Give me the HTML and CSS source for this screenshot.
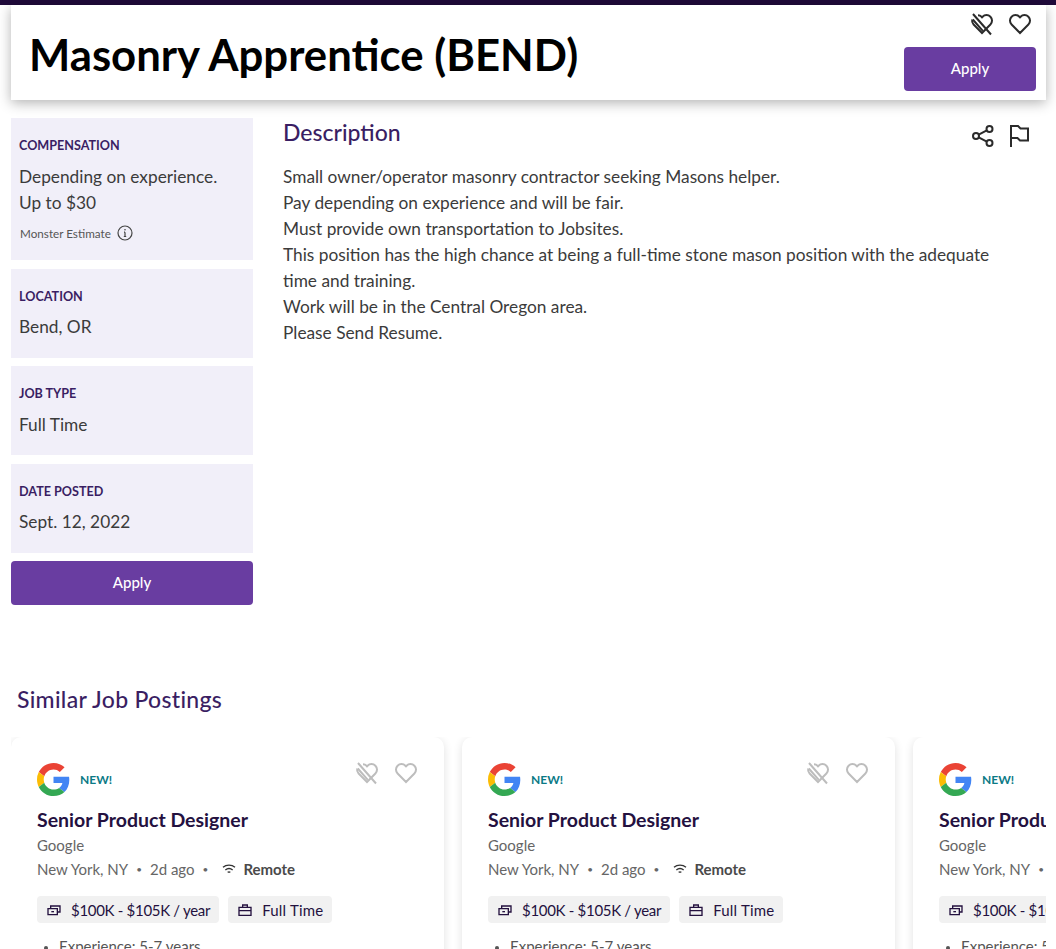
FILE: index.html
```html
<!DOCTYPE html>
<html lang="en">
<head>
  <meta charset="UTF-8">
  <meta name="viewport" content="width=device-width, initial-scale=1.0">
  <title>Masonry Apprentice (BEND)</title>
  <link rel="stylesheet" href="styles.css">
</head>
<body>
  <svg class="sprites" width="0" height="0">
    <symbol id="heart" viewBox="0 0 24 24"><path d="M12 21 3.600 12.500a5.500 5.500 0 0 1 0-7.800 5.500 5.500 0 0 1 7.800 0l.6.6.6-.6a5.500 5.500 0 0 1 7.800 0 5.500 5.500 0 0 1 0 7.800z"/></symbol>
    <symbol id="heart-off" viewBox="0 0 24 24"><path d="M8 3.200c1.300 0 2.500.5 3.400 1.500l.6.6.6-.6a5.500 5.500 0 0 1 7.800 0 5.500 5.500 0 0 1 0 7.800L12 21l-8.400-8.500a5.500 5.500 0 0 1-1.400-5"/><path d="M3 2l18 20.500M2.800 7.500l10 11.300"/></symbol>
    <symbol id="google" viewBox="0 0 48 48">
      <path fill="#EA4335" d="M24 9.500c3.500 0 6.700 1.200 9.200 3.600l6.900-6.900C35.900 2.400 30.500 0 24 0 14.600 0 6.500 5.400 2.600 13.200l8 6.200C12.400 13.700 17.700 9.500 24 9.500z"/>
      <path fill="#4285F4" d="M46.980 24.550c0-1.570-.15-3.090-.38-4.550H24v9.020h12.940c-.58 2.960-2.260 5.480-4.780 7.180l7.730 6c4.510-4.180 7.090-10.360 7.090-17.650z"/>
      <path fill="#FBBC05" d="M10.530 28.590A14.500 14.500 0 0 1 9.770 24c0-1.600.27-3.140.76-4.590l-7.980-6.190A23.900 23.900 0 0 0 0 24c0 3.870.92 7.520 2.560 10.780z"/>
      <path fill="#34A853" d="M24 48c6.480 0 11.930-2.130 15.890-5.810l-7.730-6c-2.150 1.450-4.920 2.300-8.160 2.300-6.260 0-11.570-4.220-13.470-9.910l-7.980 6.190C6.510 42.620 14.620 48 24 48z"/>
    </symbol>
    <symbol id="wifi" viewBox="0 0 24 24"><path d="M3 9.500c5-4.500 13-4.500 18 0M6.500 13.500c3.200-2.700 7.800-2.700 11 0M10 17c1.200-.8 2.800-.8 4 0"/></symbol>
    <symbol id="money" viewBox="0 0 24 24"><path d="M3 10h14v9H3zM7 10V6h14v9h-4"/><path d="M8 14.500h4"/></symbol>
    <symbol id="case" viewBox="0 0 24 24"><path d="M3 8h18v12H3zM8.500 8V4.500h7V8M3 13h18"/></symbol>
  </svg>

  <div class="top-bar"></div>

  <header class="job-header">
    <h1>Masonry Apprentice (BEND)</h1>
    <div class="header-actions">
      <div class="icon-row">
        <svg class="icon"><use href="#heart-off"/></svg>
        <svg class="icon"><use href="#heart"/></svg>
      </div>
      <a class="btn header-btn">Apply</a>
    </div>
  </header>

  <div class="job-body">
    <aside class="sidebar">
      <section class="fact fact-comp">
        <h3>COMPENSATION</h3>
        <p>Depending on experience.<br>Up to $30</p>
        <div class="estimate">
          Monster Estimate
          <svg class="info" viewBox="0 0 16 16"><circle cx="8" cy="8" r="7"/><path d="M8 7.200v4.300M6.800 11.500h2.400M7 7.200h1"/><circle class="dot" cx="8" cy="4.700" r=".8"/></svg>
        </div>
      </section>
      <section class="fact">
        <h3>LOCATION</h3>
        <p>Bend, OR</p>
      </section>
      <section class="fact">
        <h3>JOB TYPE</h3>
        <p>Full Time</p>
      </section>
      <section class="fact">
        <h3>DATE POSTED</h3>
        <p>Sept. 12, 2022</p>
      </section>
      <a class="btn">Apply</a>
    </aside>

    <main class="description">
      <div class="description-head">
        <h2>Description</h2>
        <div class="icon-row">
          <svg class="icon" viewBox="0 0 24 24"><circle cx="18.500" cy="5" r="3"/><circle cx="5" cy="12" r="3"/><circle cx="18.500" cy="19" r="3"/><path d="M7.700 10.600l8.100-4.200M7.700 13.400l8.100 4.200"/></svg>
          <svg class="icon" viewBox="0 0 24 24"><path d="M4 23V2h7l2.500 2.500H21v12h-8L10.500 14H4"/></svg>
        </div>
      </div>
      <p>Small owner/operator masonry contractor seeking Masons helper.<br>
      Pay depending on experience and will be fair.<br>
      Must provide own transportation to Jobsites.<br>
      This position has the high chance at being a full-time stone mason position with the adequate time and training.<br>
      Work will be in the Central Oregon area.<br>
      Please Send Resume.</p>
    </main>
  </div>

  <section class="similar">
    <h2>Similar Job Postings</h2>
    <div class="card-row">
      <article class="card">
        <div class="card-top">
          <svg class="logo"><use href="#google"/></svg>
          <span class="new">NEW!</span>
          <div class="card-icons">
            <svg class="icon"><use href="#heart-off"/></svg>
            <svg class="icon"><use href="#heart"/></svg>
          </div>
        </div>
        <h4>Senior Product Designer</h4>
        <div class="company">Google</div>
        <div class="meta">New York, NY<i>•</i>2d ago<i>•</i><svg class="wifi"><use href="#wifi"/></svg><b>Remote</b></div>
        <div class="pills">
          <span class="pill pill-pay"><svg><use href="#money"/></svg>$100K - $105K / year</span>
          <span class="pill"><svg><use href="#case"/></svg>Full Time</span>
        </div>
        <ul><li>Experience: 5-7 years</li></ul>
      </article>
      <article class="card">
        <div class="card-top">
          <svg class="logo"><use href="#google"/></svg>
          <span class="new">NEW!</span>
          <div class="card-icons">
            <svg class="icon"><use href="#heart-off"/></svg>
            <svg class="icon"><use href="#heart"/></svg>
          </div>
        </div>
        <h4>Senior Product Designer</h4>
        <div class="company">Google</div>
        <div class="meta">New York, NY<i>•</i>2d ago<i>•</i><svg class="wifi"><use href="#wifi"/></svg><b>Remote</b></div>
        <div class="pills">
          <span class="pill pill-pay"><svg><use href="#money"/></svg>$100K - $105K / year</span>
          <span class="pill"><svg><use href="#case"/></svg>Full Time</span>
        </div>
        <ul><li>Experience: 5-7 years</li></ul>
      </article>
      <article class="card">
        <div class="card-top">
          <svg class="logo"><use href="#google"/></svg>
          <span class="new">NEW!</span>
          <div class="card-icons">
            <svg class="icon"><use href="#heart-off"/></svg>
            <svg class="icon"><use href="#heart"/></svg>
          </div>
        </div>
        <h4>Senior Product Designer</h4>
        <div class="company">Google</div>
        <div class="meta">New York, NY<i>•</i>2d ago<i>•</i><svg class="wifi"><use href="#wifi"/></svg><b>Remote</b></div>
        <div class="pills">
          <span class="pill pill-pay"><svg><use href="#money"/></svg>$100K - $105K / year</span>
          <span class="pill"><svg><use href="#case"/></svg>Full Time</span>
        </div>
        <ul><li>Experience: 5-7 years</li></ul>
      </article>
    </div>
  </section>
</body>
</html>
```

FILE: styles.css
```css
html, body {
  height: 949px;
  overflow: hidden;
}

body {
  margin: 0;
  background-color: #fff;
  color: #3b3b3b;
  font-family: "Lato", "Open Sans", sans-serif;
  font-size: 17px;
}

.sprites {
  display: none;
}

.top-bar {
  height: 5px;
  background-color: #1f0a3a;
}

.job-header {
  display: flex;
  justify-content: space-between;
  height: 95px;
  margin: 0 10px 0 11px;
  padding: 0 10px 0 18px;
  box-sizing: border-box;
  background-color: #fff;
  box-shadow: 0 3px 12px rgba(0, 0, 0, 0.3);
}

.job-header h1 {
  margin: 23px 0 0;
  color: #000;
  font-size: 43.700px;
  line-height: 52px;
  font-weight: 700;
}

.header-actions {
  display: flex;
  flex-direction: column;
  align-items: flex-end;
}

.icon-row {
  display: flex;
  gap: 14px;
  margin: 7px 4px 0 0;
}

.icon {
  width: 24px;
  height: 24px;
  fill: none;
  stroke: #2b2b2b;
  stroke-width: 2;
}

.btn {
  display: block;
  height: 44px;
  border-radius: 4px;
  background-color: #693da1;
  color: #fff;
  font-size: 15px;
  font-weight: 500;
  line-height: 42px;
  text-align: center;
}

.header-btn {
  width: 132px;
  margin-top: 11px;
}

.job-body {
  display: flex;
  height: 560px;
  padding: 18px 10px 0 11px;
  box-sizing: border-box;
}

.sidebar {
  width: 242px;
  flex-shrink: 0;
  display: flex;
  flex-direction: column;
  gap: 8.600px;
}

.fact {
  height: 89px;
  padding: 20px 8px 0;
  box-sizing: border-box;
  background-color: #f1eff9;
}

.fact-comp {
  height: 142px;
}

.fact h3 {
  margin: 0;
  color: #3a1e63;
  font-size: 12.600px;
  line-height: 16px;
  font-weight: 700;
}

.fact p {
  margin: 9.700px 0 0;
  font-size: 17.300px;
  line-height: 26px;
}

.estimate {
  display: flex;
  align-items: center;
  gap: 6px;
  margin: 9px 0 0 1px;
  font-size: 11.700px;
  color: #555;
}

.info {
  width: 16px;
  height: 16px;
  fill: none;
  stroke: #444;
  stroke-width: 1.200;
}

.info .dot {
  fill: #444;
  stroke: none;
}

.description {
  flex: 1;
  margin-left: 30px;
}

.description-head {
  display: flex;
  justify-content: space-between;
}

.description-head h2 {
  margin: -1px 0 0;
  color: #3a1e63;
  font-size: 23px;
  line-height: 30px;
  font-weight: 500;
}

.description-head .icon-row {
  margin: 6px 15px 0 0;
  gap: 12px;
}

.description p {
  margin: 16px 40px 0 0;
  font-size: 17.300px;
  line-height: 26px;
}

.similar {
  padding-left: 11px;
}

.similar h2 {
  margin: 24px 0 23px 6px;
  color: #3a1e63;
  font-size: 23px;
  line-height: 30px;
  font-weight: 500;
  letter-spacing: 0.3px;
}

.card-row {
  display: flex;
  gap: 18px;
  width: 1035px;
  overflow: hidden;
  padding-bottom: 20px;
}

.card {
  width: 433px;
  height: 300px;
  flex-shrink: 0;
  padding: 26px 26px 0;
  box-sizing: border-box;
  border-radius: 10px;
  background-color: #fff;
  box-shadow: 0 2px 10px rgba(0, 0, 0, 0.12);
}

.card-top {
  display: flex;
  align-items: center;
  height: 33px;
}

.logo {
  width: 33px;
  height: 33px;
}

.new {
  margin-left: 10px;
  color: #0b7a86;
  font-size: 12px;
  font-weight: 700;
}

.card-icons {
  display: flex;
  gap: 15px;
  margin: -14px 0 0 auto;
}

.card-icons .icon {
  stroke: #bdbdbd;
}

.card h4 {
  margin: 11px 0 0;
  color: #24113f;
  font-size: 19.500px;
  line-height: 26px;
  font-weight: 700;
}

.company {
  margin-top: 2px;
  font-size: 15px;
  line-height: 20px;
  color: #666;
}

.meta {
  display: flex;
  align-items: center;
  margin-top: 4px;
  font-size: 15px;
  line-height: 20px;
  color: #666;
}

.meta i {
  margin: 0 8px;
  font-size: 10px;
  font-style: normal;
}

.meta b {
  color: #4a4a4a;
  font-weight: 700;
}

.wifi {
  width: 16px;
  height: 16px;
  margin: 0 6px 0 5px;
  fill: none;
  stroke: #333;
  stroke-width: 2;
}

.pills {
  display: flex;
  gap: 9px;
  margin-top: 17px;
}

.pill {
  display: flex;
  align-items: center;
  gap: 9px;
  height: 27px;
  padding: 0 9px;
  border-radius: 4px;
  background-color: #f1f1f1;
  color: #24113f;
  font-size: 15px;
  letter-spacing: 0.2px;
  white-space: nowrap;
}

.pill-pay {
  letter-spacing: -0.3px;
}

.pill svg {
  width: 16px;
  height: 16px;
  fill: none;
  stroke: #24113f;
  stroke-width: 2;
}

.card ul {
  margin: 13px 0 0;
  padding-left: 22px;
  font-size: 15px;
  line-height: 20px;
  color: #555;
}

.card li::marker {
  font-size: 12px;
}
```
